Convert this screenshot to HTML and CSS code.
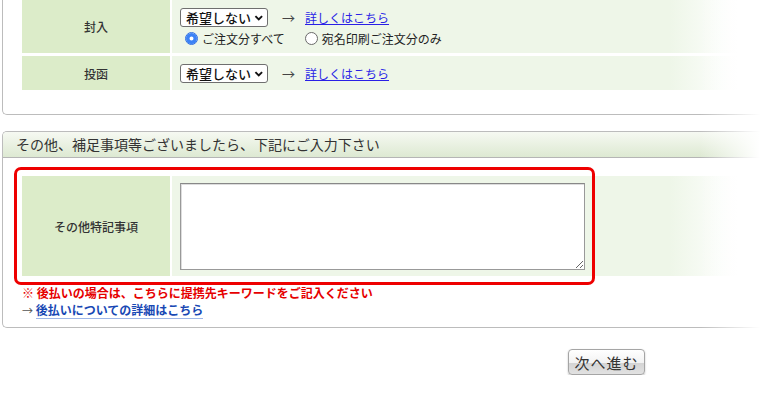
FILE: index.html
```html
<!DOCTYPE html>
<html lang="ja">
<head>
<meta charset="utf-8">
<link rel="stylesheet" href="styles.css">
</head>
<body>
<div class="panel panel-top">
  <div class="tbl">
    <div class="lbl row1">封入</div>
    <div class="val row1">
      <div class="line">
        <span class="sel"><select><option>希望しない</option></select><svg width="10" height="8" viewBox="0 0 10 8"><path d="M1.5 2 L5 5.5 L8.5 2" fill="none" stroke="#111" stroke-width="2"/></svg></span>
        <span class="arrow">→</span>
        <a href="#" class="more">詳しくはこちら</a>
      </div>
      <div class="radios">
        <label class="radio"><input type="radio" name="fu" checked><span>ご注文分すべて</span></label>
        <label class="radio"><input type="radio" name="fu"><span>宛名印刷ご注文分のみ</span></label>
      </div>
    </div>
    <div class="lbl row2">投函</div>
    <div class="val row2">
      <div class="line">
        <span class="sel"><select><option>希望しない</option></select><svg width="10" height="8" viewBox="0 0 10 8"><path d="M1.5 2 L5 5.5 L8.5 2" fill="none" stroke="#111" stroke-width="2"/></svg></span>
        <span class="arrow">→</span>
        <a href="#" class="more">詳しくはこちら</a>
      </div>
    </div>
  </div>
</div>

<div class="panel panel-notes">
  <div class="head">その他、補足事項等ございましたら、下記にご入力下さい</div>
  <div class="body">
    <div class="tbl">
      <div class="lbl row3">その他特記事項</div>
      <div class="val row3"><textarea></textarea></div>
    </div>
    <div class="redbox"></div>
    <p class="warn">※ 後払いの場合は、こちらに提携先キーワードをご記入ください</p>
    <p class="detail"><span class="darr">→</span> <a href="#">後払いについての詳細はこちら</a></p>
  </div>
</div>

<div class="actions">
  <button class="next">次へ進む</button>
</div>
</body>
</html>
```

FILE: styles.css
```css
* { box-sizing: border-box; }
body {
  margin: 0;
  font-family: "Noto Sans CJK JP", "Noto Sans", sans-serif;
  color: #333;
  background: #fff;
  font-size: 12px;
}
.panel {
  position: relative;
  margin-left: 2px;
  border-left: 1px solid #bcbcbc;
  border-bottom: 1px solid #bcbcbc;
  border-bottom-left-radius: 5px;
}
.panel::after {
  content: "";
  position: absolute;
  top: -1px;
  right: 0;
  bottom: -1px;
  width: 60px;
  background: linear-gradient(to right, rgba(255,255,255,0), #fff);
  pointer-events: none;
}
.panel-top {
  padding: 0 0 24px 19px;
}
.tbl {
  display: grid;
  grid-template-columns: 148px 565px;
  column-gap: 2px;
  row-gap: 3px;
}
.lbl {
  background: #dcecc9;
  display: flex;
  align-items: center;
  justify-content: center;
  font-size: 12px;
  font-weight: 500;
  color: #333;
}
.val {
  background: linear-gradient(to right, #eef6e8 88%, #fff);
  padding: 8px 0 0 8px;
}
.row1 { height: 53px; }
.row2 { height: 34px; }
.row3 { height: 100px; }
.val.row3 { padding: 7px 0 0 8px; }
.line {
  display: flex;
  align-items: center;
  height: 19px;
}
.sel {
  display: inline-flex;
  align-items: center;
  width: 88px;
  height: 19px;
  border: 1px solid #6f6f6f;
  border-radius: 3px;
  background: #fff;
  padding: 0 4px 0 5px;
}
.sel select {
  appearance: none;
  -webkit-appearance: none;
  border: 0;
  background: transparent;
  font-family: "Noto Sans CJK JP", sans-serif;
  font-size: 13px;
  font-weight: 500;
  color: #111;
  padding: 0;
  margin: 0;
  width: 70px;
  height: 17px;
  line-height: 17px;
  outline: none;
}
.sel svg { margin-left: 1px; }
.arrow {
  margin-left: 14px;
  font-size: 13px;
  color: #444;
}
.more {
  margin-left: 10px;
  color: #2a1fe6;
  text-decoration: underline;
  font-size: 12px;
}
.radios {
  display: flex;
  align-items: center;
  margin-top: 4px;
  height: 14px;
  padding-left: 5px;
}
.radio {
  display: inline-flex;
  align-items: center;
  margin-right: 20px;
  font-size: 12px;
  color: #222;
}
.radio input {
  appearance: none;
  -webkit-appearance: none;
  width: 13px;
  height: 13px;
  margin: 0 4px 0 0;
  border-radius: 50%;
  border: 1px solid #6a6a6a;
  background: #fff;
}
.radio input:checked {
  border: 1px solid #2f6fe0;
  background: #fff;
  box-shadow: inset 0 0 0 3.5px #3b82f6;
}
.panel-notes {
  margin-top: 16px;
  border-top: 1px solid #bcbcbc;
  border-top-left-radius: 5px;
}
.head {
  height: 26px;
  border-bottom: 1px solid #b5b5b5;
  background: linear-gradient(#f6f9f2, #dde9d2);
  border-top-left-radius: 4px;
  padding-left: 13px;
  font-size: 14px;
  line-height: 25px;
  color: #333;
}
.body {
  position: relative;
  padding: 18px 0 8px 19px;
}
textarea {
  display: block;
  width: 405px;
  height: 87px;
  border: 1px solid #999;
  border-top-color: #888;
  box-shadow: inset 1px 1px 0 #ddd;
  background: #fff;
  resize: vertical;
  margin: 0;
}
.redbox {
  position: absolute;
  left: 11px;
  top: 9px;
  width: 581px;
  height: 118px;
  border: 3px solid #ee0000;
  border-radius: 7px;
  pointer-events: none;
}
.warn {
  margin: 8px 0 0 0;
  color: #e60000;
  font-weight: bold;
  font-size: 12px;
  line-height: 17px;
}
.detail {
  margin: 0;
  font-size: 12px;
  line-height: 17px;
  color: #555;
}
.darr { font-size: 11px; }
.detail a {
  color: #1848b4;
  font-weight: bold;
  text-decoration: none;
  border-bottom: 1px solid #9db6e8;
}
.actions {
  display: flex;
  padding: 21px 0 0 568px;
}
.next {
  width: 77px;
  height: 26px;
  border: 1px solid #a5a5a5;
  border-radius: 4px;
  background: linear-gradient(#ffffff, #f2f2f2 55%, #d4d4d4 56%, #e2e2e2);
  box-shadow: 0 1px 2px rgba(0,0,0,0.25);
  font-family: "Noto Sans CJK JP", sans-serif;
  font-size: 15px;
  letter-spacing: 1px;
  color: #333;
  padding: 0;
}
```
